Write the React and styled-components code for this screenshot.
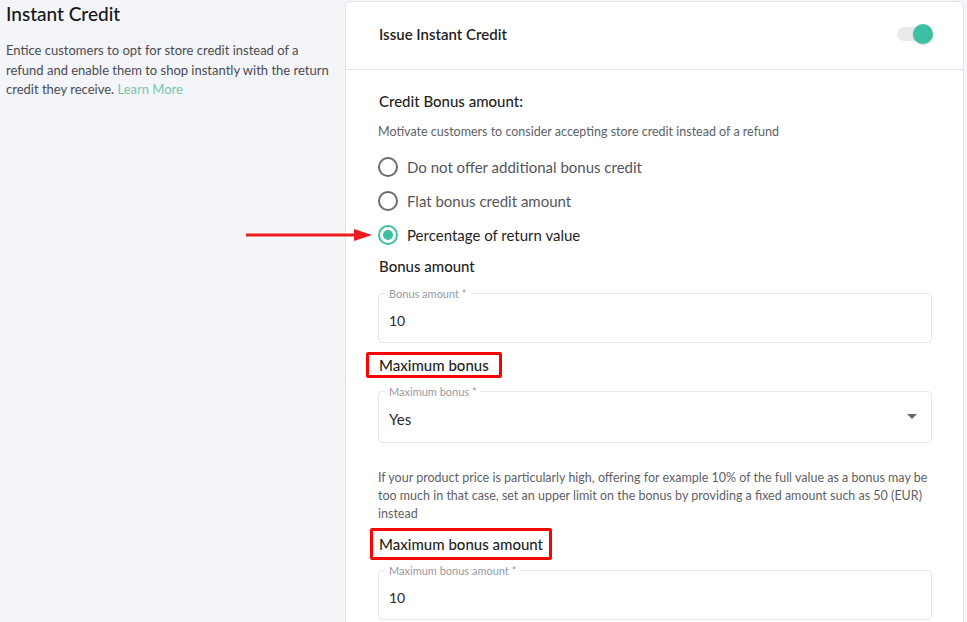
import { createGlobalStyle, styled } from 'styled-components'

const GlobalStyle = createGlobalStyle`
  html, body {
    margin: 0;
    padding: 0;
    background: #f4f5f8;
    font-family: 'Lato', 'Open Sans', sans-serif;
    color: #1f1f24;
  }
  * { box-sizing: border-box; }
`

const Page = styled.div`
  display: flex;
  align-items: flex-start;
  padding-top: 1px;
  min-height: 622px;
`
const Intro = styled.div`
  width: 345px;
  flex-shrink: 0;
  padding: 1px 12px 0 6px;
`
const IntroTitle = styled.h1`
  margin: 0;
  font-size: 19px;
  font-weight: 500;
  line-height: 24px;
  color: #16161a;
`
const IntroText = styled.p`
  margin: 15px 0 0;
  font-size: 13px;
  line-height: 19.5px;
  color: #4a4a52;
`
const LearnMore = styled.a`
  color: #79c6ae;
  text-decoration: none;
`
const Card = styled.section`
  width: 619px;
  min-height: 640px;
  background: #fff;
  border: 1px solid #e1e4eb;
  border-radius: 6px 6px 0 0;
`
const CardHeader = styled.div`
  display: flex;
  align-items: center;
  justify-content: space-between;
  height: 68px;
  padding: 0 30px 3px 33px;
  border-bottom: 1px solid #e1e4eb;
`
const HeaderTitle = styled.span`
  font-size: 15px;
  font-weight: 600;
  color: #1f1f24;
`
const Toggle = styled.div`
  position: relative;
  width: 36px;
  height: 20px;
  display: flex;
  align-items: center;
`
const Track = styled.div`
  width: 33px;
  height: 14px;
  border-radius: 7px;
  background: #e9eaec;
`
const Thumb = styled.div`
  position: absolute;
  right: 0;
  top: 0;
  width: 20px;
  height: 20px;
  border-radius: 50%;
  background: #3dbfa4;
  box-shadow: 0 1px 2px rgba(0, 0, 0, 0.2);
`
const CardBody = styled.div`
  padding: 21px 31px 0 32px;
`
const Heading = styled.div`
  font-size: 15px;
  font-weight: 500;
  line-height: 20px;
  margin-top: ${p => p.$top || 0}px;
  padding-left: 1px;
  color: #1f1f24;
`
const Highlight = styled.span`
  position: relative;
  display: inline-block;
  &::after {
    content: '';
    position: absolute;
    left: ${p => p.$x}px;
    right: ${p => p.$x}px;
    top: ${p => p.$y}px;
    bottom: ${p => p.$y}px;
    border: 3px solid #ff0000;
    border-radius: 2px;
  }
`
const Hint = styled.p`
  margin: ${p => p.$top || 0}px 0 0;
  font-size: 12.5px;
  line-height: 18px;
  color: #5f5f66;
`
const RadioList = styled.div`
  margin-top: 9px;
  display: flex;
  flex-direction: column;
`
const RadioRow = styled.label`
  position: relative;
  display: flex;
  align-items: center;
  height: 34px;
  font-size: 15px;
  color: ${p => (p.$checked ? '#1f1f24' : '#55555c')};
`
const RadioCircle = styled.span`
  width: 20px;
  height: 20px;
  margin-right: 9px;
  border-radius: 50%;
  border: 2px solid ${p => (p.$checked ? '#3dbfa4' : '#6b6b6b')};
  display: flex;
  align-items: center;
  justify-content: center;
  &::after {
    content: '';
    display: ${p => (p.$checked ? 'block' : 'none')};
    width: 10px;
    height: 10px;
    border-radius: 50%;
    background: #3dbfa4;
  }
`
const Arrow = styled.svg`
  position: absolute;
  left: -132px;
  top: 11px;
`
const Field = styled.div`
  position: relative;
  display: flex;
  align-items: center;
  justify-content: space-between;
  height: ${p => p.$h || 50}px;
  margin-top: ${p => p.$top || 0}px;
  padding: 4px 14px 0 10px;
  border: 1px solid #e6e7ea;
  border-radius: 4px;
  font-size: ${p => p.$size || 14}px;
  color: #2a2a30;
`
const FieldLabel = styled.span`
  position: absolute;
  left: 6px;
  top: -7px;
  padding: 0 4px;
  background: #fff;
  font-size: 11px;
  line-height: 13px;
  color: #9a9aa0;
`
const Caret = styled.span`
  width: 0;
  height: 0;
  border-left: 5px solid transparent;
  border-right: 5px solid transparent;
  border-top: 5px solid #6a6a6a;
  margin-top: -6px;
`

const options = [
  { label: 'Do not offer additional bonus credit', checked: false },
  { label: 'Flat bonus credit amount', checked: false },
  { label: 'Percentage of return value', checked: true },
]

export default function App() {
  return (
    <Page>
      <GlobalStyle />
      <Intro>
        <IntroTitle>Instant Credit</IntroTitle>
        <IntroText>
          Entice customers to opt for store credit instead of a refund and enable them to shop instantly with the return credit they receive. <LearnMore href="#">Learn More</LearnMore>
        </IntroText>
      </Intro>
      <Card>
        <CardHeader>
          <HeaderTitle>Issue Instant Credit</HeaderTitle>
          <Toggle>
            <Track />
            <Thumb />
          </Toggle>
        </CardHeader>
        <CardBody>
          <Heading>Credit Bonus amount:</Heading>
          <Hint $top={12}>Motivate customers to consider accepting store credit instead of a refund</Hint>
          <RadioList>
            {options.map(o => (
              <RadioRow key={o.label} $checked={o.checked}>
                {o.checked && (
                  <Arrow width="128" height="12" viewBox="0 0 128 12">
                    <line x1="0" y1="6" x2="112" y2="6" stroke="#ee1c1c" strokeWidth="3" />
                    <polygon points="108,0 126,6 108,12" fill="#ee1c1c" />
                  </Arrow>
                )}
                <RadioCircle $checked={o.checked} />
                {o.label}
              </RadioRow>
            ))}
          </RadioList>
          <Heading $top={4}>Bonus amount</Heading>
          <Field $top={17}>
            <FieldLabel>Bonus amount *</FieldLabel>
            10
          </Field>
          <Heading $top={12}>
            <Highlight $x={-13} $y={-3}>Maximum bonus</Highlight>
          </Heading>
          <Field $top={16} $size={15} $h={52}>
            <FieldLabel>Maximum bonus *</FieldLabel>
            Yes
            <Caret />
          </Field>
          <Hint $top={26}>
            If your product price is particularly high, offering for example 10% of the full value as a bonus may be too much in that case, set an upper limit on the bonus by providing a fixed amount such as 50 (EUR) instead
          </Hint>
          <Heading $top={11}>
            <Highlight $x={-9} $y={-6}>Maximum bonus amount</Highlight>
          </Heading>
          <Field $top={16}>
            <FieldLabel>Maximum bonus amount *</FieldLabel>
            10
          </Field>
        </CardBody>
      </Card>
    </Page>
  )
}
